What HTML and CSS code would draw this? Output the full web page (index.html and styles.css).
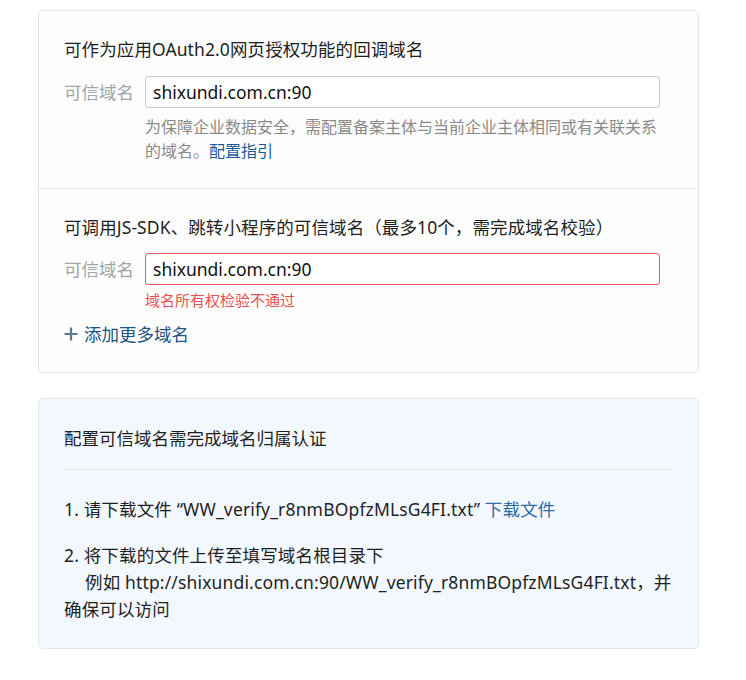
FILE: index.html
```html
<!DOCTYPE html>
<html lang="zh-CN">
<head>
<meta charset="utf-8">
<link rel="stylesheet" href="styles.css">
</head>
<body>
<div class="page">
  <div class="card">
    <section class="section">
      <div class="title">可作为应用OAuth2.0网页授权功能的回调域名</div>
      <div class="row">
        <div class="label">可信域名</div>
        <div class="field">
          <div class="input">shixundi.com.cn:90</div>
          <div class="help">为保障企业数据安全，需配置备案主体与当前企业主体相同或有关联关系的域名。<a class="link">配置指引</a></div>
        </div>
      </div>
    </section>
    <section class="section">
      <div class="title">可调用JS-SDK、跳转小程序的可信域名（最多10个，需完成域名校验）</div>
      <div class="row">
        <div class="label">可信域名</div>
        <div class="field">
          <div class="input input-error">shixundi.com.cn:90</div>
          <div class="error">域名所有权检验不通过</div>
        </div>
      </div>
      <div class="add"><svg class="plus" width="14" height="14" viewBox="0 0 14 14"><path d="M7 0.5v13M0.5 7h13" stroke="currentColor" stroke-width="2.2" fill="none"/></svg><span>添加更多域名</span></div>
    </section>
  </div>

  <div class="card note">
    <div class="note-title">配置可信域名需完成域名归属认证</div>
    <ol class="steps">
      <li>1. 请下载文件 “WW_verify_r8nmBOpfzMLsG4FI.txt” <a class="link2">下载文件</a></li>
      <li>2. 将下载的文件上传至填写域名根目录下<br><span class="indent"></span>例如 http://shixundi.com.cn:90/WW_verify_r8nmBOpfzMLsG4FI.txt，并确保可以访问</li>
    </ol>
  </div>
</div>
</body>
</html>
```
FILE: styles.css
```css
* { box-sizing: border-box; }
body {
  margin: 0;
  background: #ffffff;
  font-family: "Noto Sans", "Noto Sans CJK SC", sans-serif;
  color: #1f1f1f;
}
.page {
  padding: 10px 47px 0 38px;
  display: flex;
  flex-direction: column;
  gap: 25px;
}
.card {
  border: 1px solid #e4e6ea;
  border-radius: 5px;
  background: #fdfdfd;
}
.section {
  padding: 26px 38px 25px 25px;
}
.section + .section {
  border-top: 1px solid #e8e9ec;
  padding-top: 26px;
  padding-bottom: 26px;
}
.section + .section .row {
  margin-top: 14px;
}
.title {
  font-size: 17.5px;
  line-height: 24px;
  color: #1f1f1f;
  letter-spacing: 0.1px;
}
.row {
  display: flex;
  margin-top: 15px;
  gap: 11px;
}
.label {
  font-size: 17.5px;
  line-height: 32px;
  color: #a2a4a8;
  white-space: nowrap;
}
.field {
  flex: 1;
}
.input {
  height: 32px;
  border: 1px solid #c9c9c9;
  border-radius: 3px;
  background: #fff;
  font-size: 17.5px;
  line-height: 30px;
  padding: 0 7px;
  color: #111;
}
.input-error {
  border-color: #ef5b5b;
}
.help {
  margin-top: 7px;
  font-size: 16px;
  line-height: 24px;
  color: #8a8a8a;
  padding-right: 2px;
}
.link {
  color: #1b5a9a;
}
.error {
  margin-top: 5px;
  font-size: 15px;
  line-height: 20px;
  color: #ea5050;
}
.add {
  margin-top: 12px;
  display: flex;
  align-items: center;
  gap: 6px;
  font-size: 17.5px;
  line-height: 24px;
  color: #22537f;
}
.plus {
  color: #5f7690;
}
.note {
  background: #f2f8fe;
  padding: 27px 25px 25px 25px;
}
.note-title {
  font-size: 17.5px;
  line-height: 24px;
  padding-bottom: 19px;
  border-bottom: 1px solid #e2e7ed;
}
.steps {
  list-style: none;
  margin: 26px 0 0 0;
  padding: 0;
  font-size: 17.5px;
  line-height: 27px;
  letter-spacing: 0.15px;
}
.steps li + li {
  margin-top: 19px;
}
.link2 {
  color: #2a6aa6;
}
.indent {
  display: inline-block;
  width: 21px;
}
```
